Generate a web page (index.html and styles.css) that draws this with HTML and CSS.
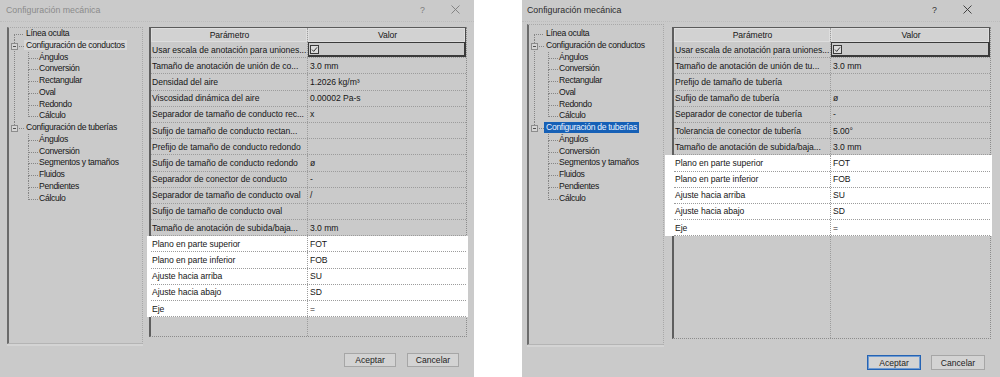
FILE: index.html
```html
<!DOCTYPE html>
<html>
<head>
    <meta charset="utf-8">
    <link rel="stylesheet" href="styles.css">
</head>
<body>

<!-- Dialog 1: duct settings selected -->
<div class="dialog dlg-a">
    <div class="titlebar">
        <span class="title">Configuración mecánica</span>
        <span class="help">?</span>
        <svg class="close" width="9" height="9" viewBox="0 0 9 9"><path d="M0.5 0.5 L8.5 8.5 M8.5 0.5 L0.5 8.5"/></svg>
    </div>
    <div class="main">
        <div class="tree">
            <ul class="root">
                <li><span class="lbl">Línea oculta</span></li>
                <li><span class="exp"></span><span class="lbl sel-gray">Configuración de conductos</span>
                    <ul>
                        <li><span class="lbl">Ángulos</span></li>
                        <li><span class="lbl">Conversión</span></li>
                        <li><span class="lbl">Rectangular</span></li>
                        <li><span class="lbl">Oval</span></li>
                        <li><span class="lbl">Redondo</span></li>
                        <li><span class="lbl">Cálculo</span></li>
                    </ul>
                </li>
                <li><span class="exp"></span><span class="lbl">Configuración de tuberías</span>
                    <ul>
                        <li><span class="lbl">Ángulos</span></li>
                        <li><span class="lbl">Conversión</span></li>
                        <li><span class="lbl">Segmentos y tamaños</span></li>
                        <li><span class="lbl">Fluidos</span></li>
                        <li><span class="lbl">Pendientes</span></li>
                        <li><span class="lbl">Cálculo</span></li>
                    </ul>
                </li>
            </ul>
        </div>
        <div class="grid">
            <div class="row head"><div class="c1">Parámetro</div><div class="c2">Valor</div></div>
            <div class="row"><div class="c1">Usar escala de anotación para uniones...</div><div class="c2 focus"><svg class="check" width="9" height="9" viewBox="0 0 9 9"><rect x="0.5" y="0.5" width="8" height="8"/><path d="M2 4.6 L3.7 6.4 L7 2.4"/></svg></div></div>
            <div class="row"><div class="c1">Tamaño de anotación de unión de co...</div><div class="c2">3.0 mm</div></div>
            <div class="row"><div class="c1">Densidad del aire</div><div class="c2">1.2026 kg/m³</div></div>
            <div class="row"><div class="c1">Viscosidad dinámica del aire</div><div class="c2">0.00002 Pa-s</div></div>
            <div class="row"><div class="c1">Separador de tamaño de conducto rec...</div><div class="c2">x</div></div>
            <div class="row"><div class="c1">Sufijo de tamaño de conducto rectan...</div><div class="c2"></div></div>
            <div class="row"><div class="c1">Prefijo de tamaño de conducto redondo</div><div class="c2"></div></div>
            <div class="row"><div class="c1">Sufijo de tamaño de conducto redondo</div><div class="c2">ø</div></div>
            <div class="row"><div class="c1">Separador de conector de conducto</div><div class="c2">-</div></div>
            <div class="row"><div class="c1">Separador de tamaño de conducto oval</div><div class="c2">/</div></div>
            <div class="row"><div class="c1">Sufijo de tamaño de conducto oval</div><div class="c2"></div></div>
            <div class="row"><div class="c1">Tamaño de anotación de subida/baja...</div><div class="c2">3.0 mm</div></div>
            <div class="hl">
                <div class="row"><div class="c1">Plano en parte superior</div><div class="c2">FOT</div></div>
                <div class="row"><div class="c1">Plano en parte inferior</div><div class="c2">FOB</div></div>
                <div class="row"><div class="c1">Ajuste hacia arriba</div><div class="c2">SU</div></div>
                <div class="row"><div class="c1">Ajuste hacia abajo</div><div class="c2">SD</div></div>
                <div class="row"><div class="c1">Eje</div><div class="c2">=</div></div>
            </div>
            <div class="fill"><div class="c1"></div><div class="c2"></div></div>
        </div>
    </div>
    <div class="footer">
        <button class="btn">Aceptar</button>
        <button class="btn">Cancelar</button>
    </div>
</div>

<!-- Dialog 2: pipe settings selected -->
<div class="dialog dlg-b">
    <div class="titlebar">
        <span class="title">Configuración mecánica</span>
        <span class="help">?</span>
        <svg class="close" width="9" height="9" viewBox="0 0 9 9"><path d="M0.5 0.5 L8.5 8.5 M8.5 0.5 L0.5 8.5"/></svg>
    </div>
    <div class="main">
        <div class="tree">
            <ul class="root">
                <li><span class="lbl">Línea oculta</span></li>
                <li><span class="exp"></span><span class="lbl">Configuración de conductos</span>
                    <ul>
                        <li><span class="lbl">Ángulos</span></li>
                        <li><span class="lbl">Conversión</span></li>
                        <li><span class="lbl">Rectangular</span></li>
                        <li><span class="lbl">Oval</span></li>
                        <li><span class="lbl">Redondo</span></li>
                        <li><span class="lbl">Cálculo</span></li>
                    </ul>
                </li>
                <li><span class="exp"></span><span class="lbl sel-blue">Configuración de tuberías</span>
                    <ul>
                        <li><span class="lbl">Ángulos</span></li>
                        <li><span class="lbl">Conversión</span></li>
                        <li><span class="lbl">Segmentos y tamaños</span></li>
                        <li><span class="lbl">Fluidos</span></li>
                        <li><span class="lbl">Pendientes</span></li>
                        <li><span class="lbl">Cálculo</span></li>
                    </ul>
                </li>
            </ul>
        </div>
        <div class="grid">
            <div class="row head"><div class="c1">Parámetro</div><div class="c2">Valor</div></div>
            <div class="row"><div class="c1">Usar escala de anotación para uniones...</div><div class="c2 focus"><svg class="check" width="9" height="9" viewBox="0 0 9 9"><rect x="0.5" y="0.5" width="8" height="8"/><path d="M2 4.6 L3.7 6.4 L7 2.4"/></svg></div></div>
            <div class="row"><div class="c1">Tamaño de anotación de unión de tu...</div><div class="c2">3.0 mm</div></div>
            <div class="row"><div class="c1">Prefijo de tamaño de tubería</div><div class="c2"></div></div>
            <div class="row"><div class="c1">Sufijo de tamaño de tubería</div><div class="c2">ø</div></div>
            <div class="row"><div class="c1">Separador de conector de tubería</div><div class="c2">-</div></div>
            <div class="row"><div class="c1">Tolerancia de conector de tubería</div><div class="c2">5.00°</div></div>
            <div class="row"><div class="c1">Tamaño de anotación de subida/baja...</div><div class="c2">3.0 mm</div></div>
            <div class="hl">
                <div class="row"><div class="c1">Plano en parte superior</div><div class="c2">FOT</div></div>
                <div class="row"><div class="c1">Plano en parte inferior</div><div class="c2">FOB</div></div>
                <div class="row"><div class="c1">Ajuste hacia arriba</div><div class="c2">SU</div></div>
                <div class="row"><div class="c1">Ajuste hacia abajo</div><div class="c2">SD</div></div>
                <div class="row"><div class="c1">Eje</div><div class="c2">=</div></div>
            </div>
            <div class="fill"><div class="c1"></div><div class="c2"></div></div>
        </div>
    </div>
    <div class="footer">
        <button class="btn default">Aceptar</button>
        <button class="btn">Cancelar</button>
    </div>
</div>

</body>
</html>
```

FILE: styles.css
```css
* {box-sizing: border-box;}

body {
    margin: 0;
    height: 377px;
    overflow: hidden;
    display: flex;
    background: #fff;
    font-family: "Liberation Sans", Arial, sans-serif;
    color: #161616;
}

/* Dialog window */
.dialog {
    height: 377px;
    display: flex;
    flex-direction: column;
    background: #cacaca;
}
.dlg-a { width: 474px; }
.dlg-b { width: 478px; margin-left: 48px; }

/* Title bar */
.titlebar {
    height: 22px;
    display: flex;
    align-items: center;
    padding: 0 14px 2px 6px;
    border-bottom: 1px dotted #bcbcbc;
    font-size: 8.8px;
}
.title {
    flex: 1;
    color: #8a8a8a;
}
.help {
    color: #7c7c7c;
    margin-right: 26px;
}
.close path {
    stroke: #7c7c7c;
    stroke-width: 0.9;
}
.dlg-b .titlebar { padding: 0 28px 2px 5px; }
.dlg-b .title { color: #2a2a2a; }
.dlg-b .help { color: #333; }
.dlg-b .close path { stroke: #333; }

/* Tree + table area */
.main {
    display: flex;
    align-items: flex-start;
    margin-top: 5px;
    height: 320px;
    padding-left: 7px;
}
.dlg-b .main { padding-left: 5px; }

.tree {
    width: 136px;
    height: 317px;
    border-left: 2px solid #6b6b6b;
    border-top: 1px dotted #a8a8a8;
    border-right: 1px dotted #a8a8a8;
    border-bottom: 1px solid #b4b4b4;
    box-shadow: 0 2px 0 #d4d4d4;
    font-size: 8.6px;
    letter-spacing: -0.3px;
}
.dlg-b .tree {
    width: 137px;
    height: 321px;
    margin-top: -3px;
    padding-top: 3px;
}
.tree ul {
    list-style: none;
    margin: 0;
    padding: 0 0 0 4px;
}
.tree ul.root { padding-left: 5px; }
.tree li {
    position: relative;
    padding-left: 10px;
    line-height: 11.75px;
    white-space: nowrap;
}
.tree ul ul li { padding-left: 9px; }

/* dotted connector lines */
.tree li::before {
    content: "";
    position: absolute;
    left: 0;
    top: 0;
    width: 9px;
    height: 6px;
    border-left: 1px dotted #858585;
    border-bottom: 1px dotted #858585;
}
.tree li:not(:last-child)::after {
    content: "";
    position: absolute;
    left: 0;
    top: 6px;
    bottom: 0;
    border-left: 1px dotted #858585;
}
.tree .root > li:first-child::before { border-left: none; }

.exp {
    position: absolute;
    left: -3px;
    top: 3px;
    width: 7px;
    height: 7px;
    border: 1px solid #8c8c8c;
    background: #d5d5d5;
    z-index: 1;
}
.exp::after {
    content: "";
    position: absolute;
    left: 1px;
    right: 1px;
    top: 2px;
    height: 1px;
    background: #505050;
}

.lbl {
    display: inline-block;
    padding: 0 2px;
    line-height: 10.5px;
}
.sel-gray { background: #d8d8d8; }
.sel-blue { background: #1660b6; color: #eaf2ff; }

/* Parameter table */
.grid {
    margin-left: 6px;
    width: 318px;
    height: 310px;
    display: flex;
    flex-direction: column;
    border-left: 2px solid #5e5e5e;
    border-right: 1px dotted #8c8c8c;
    border-bottom: 1px dotted #8c8c8c;
    font-size: 8.6px;
    letter-spacing: -0.05px;
}
.dlg-b .grid {
    margin-left: 8px;
    width: 319px;
    height: 312px;
}

.row {
    display: flex;
    flex: none;
    height: 16.2px;
    border-bottom: 1px dotted #9c9c9c;
}
.c1 {
    width: 157px;
    flex: none;
    padding-left: 1px;
    border-right: 1px dotted #9c9c9c;
    display: flex;
    align-items: center;
    white-space: nowrap;
    overflow: hidden;
}
.c2 {
    flex: 1;
    padding-left: 2px;
    display: flex;
    align-items: center;
    white-space: nowrap;
}

.row.head {
    height: 15px;
    border-top: 1px solid #5a5a5a;
    border-bottom: none;
    background: #d2d2d2;
}
.head .c1, .head .c2 {
    justify-content: center;
    box-shadow: inset 0 0 0 1px #dedede;
}
.head .c2 { border-right: 1px solid #4a4a4a; }

.focus { box-shadow: inset 0 0 0 1px #3a3a3a, inset -1px -1px 0 1px #3a3a3a; }

.check rect {
    fill: #dcdcdc;
    stroke: #3a3a3a;
}
.check path {
    fill: none;
    stroke: #222;
    stroke-width: 0.9;
}

/* white band behind the annotation rows */
.hl {
    background: #fff;
    margin: 0 -2px 0 -4px;
    padding: 0 2px 0 4px;
}
.dlg-b .hl {
    margin-left: -9px;
    padding-left: 9px;
}

.fill {
    flex: 1;
    display: flex;
}

/* Buttons */
.footer {
    display: flex;
    justify-content: flex-end;
    gap: 11px;
    padding: 6px 15px 0 0;
}
.dlg-b .footer {
    gap: 10px;
    padding-top: 8px;
}
.btn {
    width: 52px;
    height: 14px;
    padding: 0;
    border: 1px solid #a6a6a6;
    background: #d3d3d3;
    font-family: "Liberation Sans", Arial, sans-serif;
    font-size: 8.6px;
    color: #1e1e1e;
}
.dlg-b .btn {
    width: 54px;
    height: 15px;
}
.btn.default {
    border: 1px solid #2563b3;
    box-shadow: inset 0 0 0 1px #6f9bd2;
}
```
